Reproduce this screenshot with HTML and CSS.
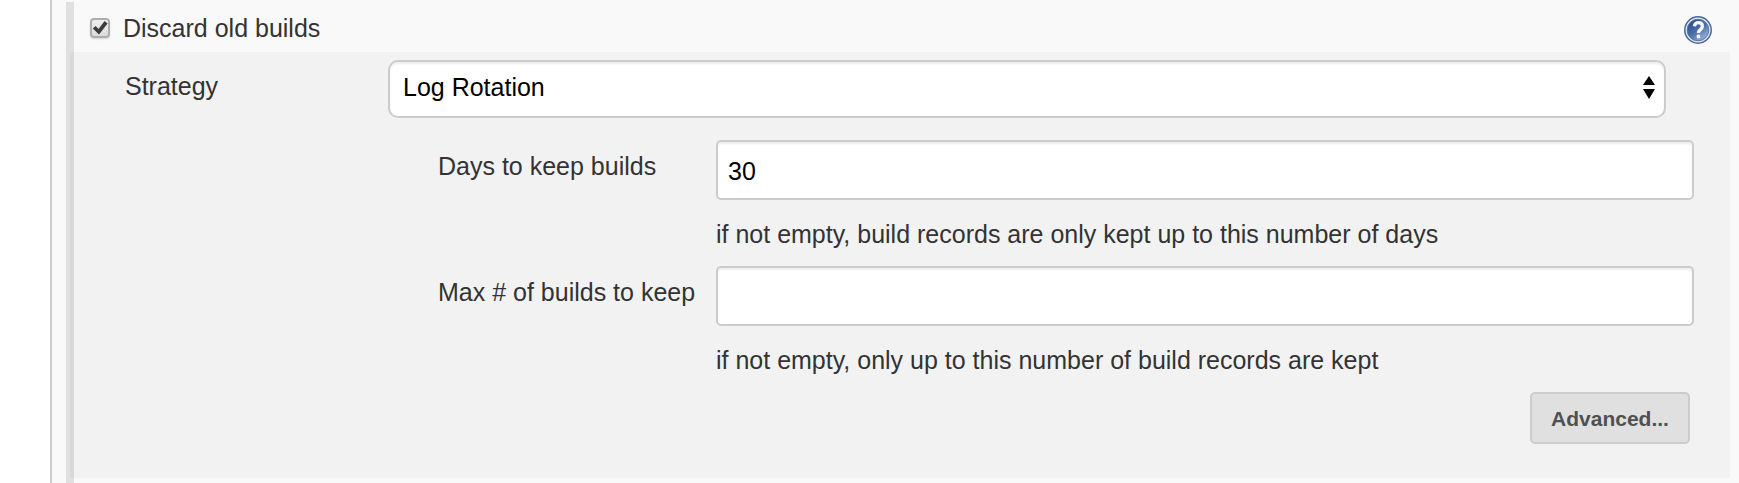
FILE: index.html
```
<!DOCTYPE html>
<html lang="en">
<head>
<meta charset="utf-8">
<meta name="viewport" content="width=device-width, initial-scale=1">
<title>Discard old builds</title>
<link rel="stylesheet" href="styles.css">
</head>
<body>
<main class="config">
  <form class="group">
    <header class="group-header">
      <label class="toggle">
        <input class="checkbox" type="checkbox" checked>
        <svg class="checkmark" viewBox="0 0 20 20" aria-hidden="true"><path d="M2.8 10.6 5.6 8l2.9 2.9L14.6 3l3 2.5L9 16.6z"/></svg>
        <span>Discard old builds</span>
      </label>
      <button class="help" type="button" aria-label="Help">
        <svg viewBox="0 0 28 28" aria-hidden="true">
          <defs>
            <linearGradient id="helpFill" x1="0.1" y1="0.1" x2="0.8" y2="1">
              <stop offset="0" stop-color="#27498a"/>
              <stop offset="0.5" stop-color="#4d70ab"/>
              <stop offset="1" stop-color="#a3bce0"/>
            </linearGradient>
          </defs>
          <circle cx="14" cy="14" r="13.2" fill="#e4eaf4" stroke="#4a6797" stroke-width="1.5"/>
          <circle cx="14" cy="14" r="10.8" fill="url(#helpFill)" stroke="#58749f" stroke-width="1"/>
          <path d="M10.4 10.2C10.8 7.7 12.3 6.7 14.4 6.7c2.4 0 4 1.4 4 3.5 0 3.2-3.9 3.3-3.9 6.7" fill="none" stroke="#fff" stroke-width="3.2"/>
          <rect x="12.8" y="18.7" width="3.4" height="3.4" fill="#fff"/>
        </svg>
      </button>
    </header>
    <section class="panel">
      <div class="strategy">
        <label class="label" for="strategy">Strategy</label>
        <div class="select-wrap">
          <select class="field select" id="strategy"><option>Log Rotation</option></select>
          <svg class="arrows" viewBox="0 0 12 24" aria-hidden="true"><path d="M0 10 6 1l6 9zM0 14h12l-6 10z"/></svg>
        </div>
      </div>
      <div class="rotation">
        <label class="label" for="days">Days to keep builds</label>
        <div class="entry">
          <input class="field text" id="days" type="text" value="30" aria-describedby="days-hint">
          <p class="hint" id="days-hint">if not empty, build records are only kept up to this number of days</p>
        </div>
        <label class="label" for="max">Max # of builds to keep</label>
        <div class="entry">
          <input class="field text" id="max" type="text" aria-describedby="max-hint">
          <p class="hint" id="max-hint">if not empty, only up to this number of build records are kept</p>
        </div>
      </div>
      <div class="actions">
        <button class="advanced" type="button">Advanced...</button>
      </div>
    </section>
  </form>
</main>
</body>
</html>
```
FILE: styles.css
```
* {
  box-sizing: border-box;
}

body {
  margin: 0;
  background: #fff;
  color: #333;
  font: 25px/28px "Liberation Sans", Arial, sans-serif;
}

.config {
  min-height: 100vh;
  margin-left: 50px;
  padding: 2px 9px 0 14px;
  display: flex;
  border-left: 2px solid #ccc;
  background: #f9f9f9;
}

.group {
  flex: 1;
  border-left: 8px solid #e0e0e0;
}

.group-header {
  height: 50px;
  padding: 2px 18px 0 16px;
  display: flex;
  align-items: center;
  justify-content: space-between;
}

.toggle {
  display: grid;
  grid-template-columns: 20px auto;
  column-gap: 13px;
  align-items: center;
}

.checkbox {
  appearance: none;
  grid-area: 1 / 1;
  width: 20px;
  height: 20px;
  margin: 0;
  border: 2px solid #adadad;
  border-radius: 4px;
  background: linear-gradient(#ededed, #dcdcdc);
  box-shadow: 0 1px 2px rgba(0, 0, 0, 0.15);
}

.checkmark {
  grid-area: 1 / 1;
  width: 20px;
  height: 20px;
  fill: #3c3c3c;
  pointer-events: none;
  visibility: hidden;
}

.checkbox:checked + .checkmark {
  visibility: visible;
}

.help {
  width: 28px;
  height: 28px;
  margin-top: 4px;
  padding: 0;
  border: 0;
  background: none;
}

.help svg {
  display: block;
}

.panel {
  margin-left: -4px;
  padding: 8px 36px 34px 55px;
  background: rgba(0, 0, 0, 0.028);
}

.strategy {
  margin: 0 28px 22px 0;
  display: grid;
  grid-template-columns: 263px 1fr;
}

.rotation {
  margin-left: 313px;
  display: grid;
  grid-template-columns: 278px 1fr;
  row-gap: 18px;
}

.label {
  padding-top: 12px;
}

.select-wrap {
  display: grid;
  align-items: center;
}

.field {
  width: 100%;
  border: 2px solid #ccc;
  background: #fff;
  box-shadow: inset 0 2px 2px rgba(0, 0, 0, 0.07);
  color: #000;
  font: inherit;
}

.select {
  appearance: none;
  grid-area: 1 / 1;
  height: 58px;
  padding: 0 40px 4px 13px;
  border-radius: 10px;
}

.arrows {
  grid-area: 1 / 1;
  justify-self: end;
  width: 12px;
  height: 24px;
  margin: 0 11px 4px 0;
  pointer-events: none;
}

.text {
  display: block;
  height: 60px;
  padding: 2px 10px 0;
  border-radius: 5px;
}

.hint {
  margin: 20px 0 0;
}

.actions {
  margin: 18px 4px 0 0;
  display: flex;
  justify-content: flex-end;
}

.advanced {
  min-width: 160px;
  height: 52px;
  padding: 2px 18px 0;
  border: 2px solid #ccc;
  border-radius: 5px;
  background: #e0e0e0;
  color: #505050;
  font: bold 21px/24px "Liberation Sans", Arial, sans-serif;
}
```
